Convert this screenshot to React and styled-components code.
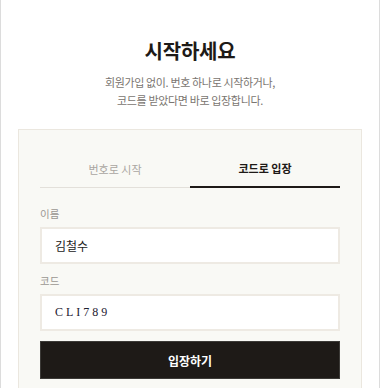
import React from "react";
import styled, { createGlobalStyle } from "styled-components";

const Global = createGlobalStyle`
  html, body { margin: 0; padding: 0; background: #ffffff; }
  body { font-family: "Noto Sans CJK KR", "Noto Sans", sans-serif; }
  * { box-sizing: border-box; }
`;

const Page = styled.div`
  width: 380px;
  min-height: 388px;
  border-left: 1px solid #dcdcdc;
  border-right: 1px solid #dcdcdc;
  padding: 36px 17px 0;
  background: #ffffff;
`;

const Header = styled.header`
  display: flex;
  flex-direction: column;
  align-items: center;
  margin-bottom: 20px;
`;

const Title = styled.h1`
  margin: 0;
  font-size: 20px;
  line-height: 30px;
  font-weight: 700;
  color: #1e1a17;
  letter-spacing: -0.2px;
`;

const Subtitle = styled.p`
  margin: 7px 0 0;
  font-size: 11px;
  line-height: 18px;
  letter-spacing: -0.35px;
  color: #7a7570;
  text-align: center;
`;

const Card = styled.section`
  background: #f9f9f5;
  border: 1px solid #ebe7df;
  padding: 21px 21px 30px;
`;

const Tabs = styled.div`
  display: grid;
  grid-template-columns: 1fr 1fr;
  border-bottom: 1px solid #e3e0da;
  margin-bottom: 17px;
`;

const Tab = styled.button`
  appearance: none;
  background: none;
  border: none;
  border-bottom: ${(p) => (p.$active ? "2px solid #1e1a17" : "0")};
  margin-bottom: ${(p) => (p.$active ? "-1px" : "0")};
  height: ${(p) => (p.$active ? "37px" : "36px")};
  padding: 0 0 ${(p) => (p.$active ? "2px" : "1px")};
  font-family: inherit;
  font-size: 11px;
  font-weight: ${(p) => (p.$active ? 700 : 400)};
  color: ${(p) => (p.$active ? "#1e1a17" : "#aaa6a1")};
  cursor: pointer;
`;

const Field = styled.div`
  display: flex;
  flex-direction: column;
  margin-bottom: ${(p) => (p.$last ? "10px" : "8px")};
`;

const Label = styled.label`
  font-size: 10.5px;
  line-height: 18px;
  color: #9b9792;
  margin-bottom: 4px;
`;

const Input = styled.input`
  height: 37px;
  width: 100%;
  border: 2px solid #eeeae3;
  background: #ffffff;
  padding: 0 13px;
  outline: none;
  font-family: ${(p) =>
    p.$code ? '"Liberation Serif", "DejaVu Serif", serif' : 'inherit'};
  font-size: 12px;
  letter-spacing: ${(p) => (p.$code ? "3px" : "0")};
  color: ${(p) => (p.$code ? "#1d2030" : "#222")};
  caret-color: #1e1a17;
`;

const Submit = styled.button`
  width: 100%;
  height: 38px;
  background: #1e1a17;
  border: 1px solid #3c3a37;
  color: #ffffff;
  font-family: inherit;
  font-size: 12px;
  font-weight: 700;
  cursor: pointer;
`;

export default function App() {
  return (
    <>
      <Global />
      <Page>
        <Header>
          <Title>시작하세요</Title>
          <Subtitle>
            회원가입 없이. 번호 하나로 시작하거나,
            <br />
            코드를 받았다면 바로 입장합니다.
          </Subtitle>
        </Header>
        <Card>
          <Tabs>
            <Tab>번호로 시작</Tab>
            <Tab $active>코드로 입장</Tab>
          </Tabs>
          <Field>
            <Label>이름</Label>
            <Input defaultValue="김철수" />
          </Field>
          <Field $last>
            <Label>코드</Label>
            <Input $code defaultValue="CLI789" autoFocus />
          </Field>
          <Submit>입장하기</Submit>
        </Card>
      </Page>
    </>
  );
}
